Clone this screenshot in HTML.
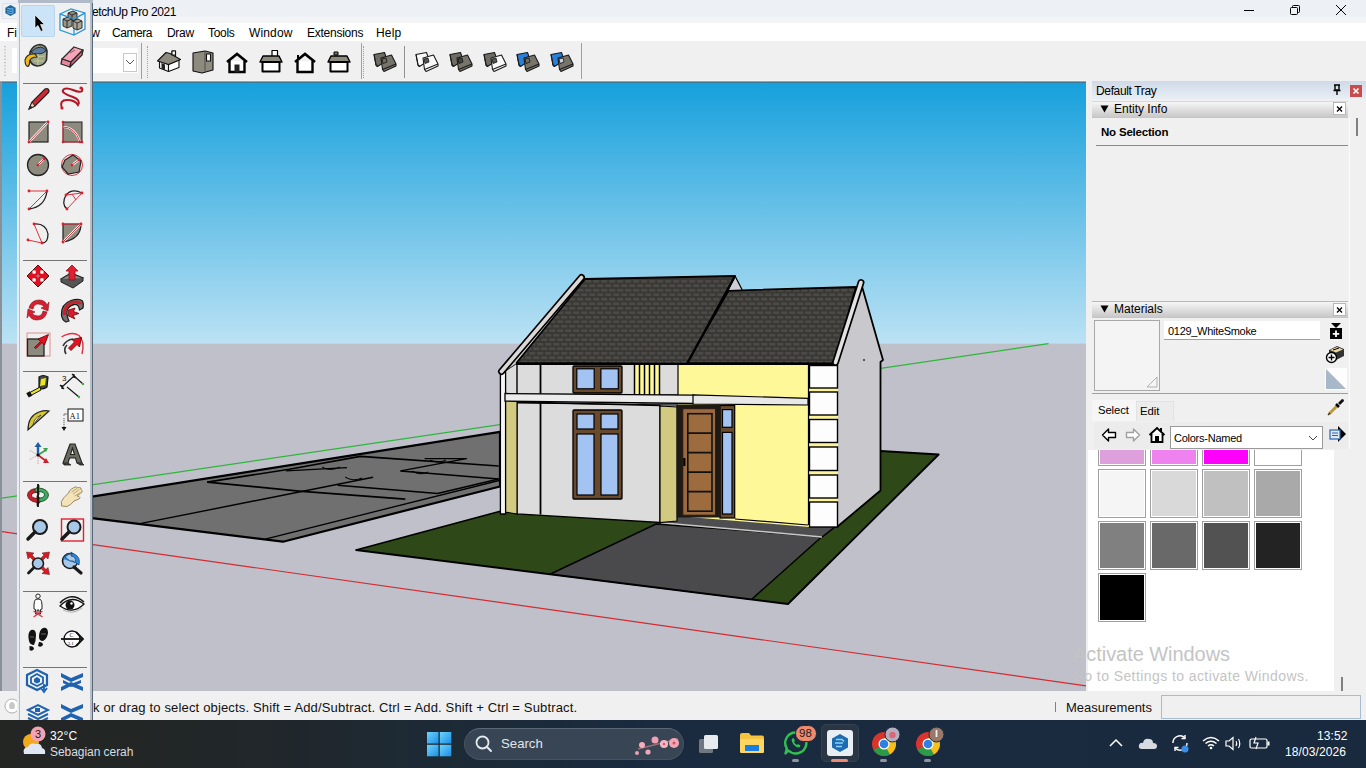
<!DOCTYPE html>
<html><head><meta charset="utf-8">
<style>
*{margin:0;padding:0;box-sizing:border-box}
html,body{width:1366px;height:768px;overflow:hidden;background:#f0f0f0;font-family:"Liberation Sans",sans-serif;color:#000}
.a{position:absolute}
svg{position:absolute;overflow:visible}
.t{position:absolute;white-space:nowrap;font-size:12px;line-height:14px}
</style></head><body>

<!-- viewport -->
<svg class="a" style="left:0;top:0" width="1366" height="768" viewBox="0 0 1366 768">
<defs>
<linearGradient id="sky" x1="0" y1="0" x2="0" y2="1">
<stop offset="0" stop-color="#16a0dc"/>
<stop offset="1" stop-color="#bce2f4"/>
</linearGradient>
<pattern id="sh" patternUnits="userSpaceOnUse" width="8" height="9">
<rect width="8" height="9" fill="#393835"/>
<path d="M1 1 H7 L7.5 3.6 H1.5Z" fill="#4d4b47"/>
<path d="M5 5.5 H11 L11.5 8.1 H5.5Z" fill="#4d4b47"/>
<path d="M-3 5.5 H3 L3.5 8.1 H-2.5Z" fill="#4d4b47"/>
</pattern>
<clipPath id="vp"><rect x="2" y="82" width="1084" height="609"/></clipPath>
</defs>
<rect x="0" y="80" width="1086" height="612" fill="#8a9098"/>
<g clip-path="url(#vp)">
<rect x="0" y="82" width="1086" height="262" fill="url(#sky)"/>
<rect x="0" y="343.6" width="1086" height="348" fill="#bfc0ca"/>
<!-- green axis -->
<path d="M0 498.4 L1048.6 343.6" stroke="#2fb53c" stroke-width="1.3"/>
<!-- red axis -->
<path d="M0 531.4 L1086 685.8" stroke="#d42a30" stroke-width="1.2"/>
<!-- neighbour pad -->
<g stroke="#000" fill="none" stroke-linejoin="round">
<path d="M92 496.6 L500 431.8 L500 486.5 L282.9 541.7 L92 518.1Z" fill="#707071" stroke-width="2.2"/>
<path d="M265.2 539.1 L499 480.5" stroke-width="1.3"/>
<path d="M141.2 523.4 L373.1 477.3" stroke-width="1.4"/>
<path d="M207.2 482.1 L299 491.1 L405.3 499.2" stroke-width="1.8"/>
<path d="M207.2 482.1 L289.3 469.2 L360.2 456.4 L498.7 466" stroke-width="1.6"/>
<path d="M286.1 470.9 L347 467.6" stroke-width="1.3"/>
<path d="M337.6 485.3 L437.5 493.4 L498.7 478.9" stroke-width="1.5"/>
<path d="M400.5 470.9 L498.7 478.9" stroke-width="1.5"/>
<path d="M400.5 470.9 L466.5 458.6 L424.6 458.6" stroke-width="1.3"/>
<path d="M322 467 Q330 472 340 467 M345 477 Q353 482 362 478 M412 471 Q420 476 428 472 M430 460 Q438 464 446 460" stroke-width="1"/>
</g>
<!-- lawn -->
<path d="M356 550 L503 510.5 L880.6 451 L938.7 454.5 L788 604Z" fill="#2e4818" stroke="#000" stroke-width="1.8" stroke-linejoin="round"/>
<!-- driveway -->
<path d="M550.5 574 L656 524 L822 536.5 L751.7 599.3Z" fill="#4a4a4c" stroke="#000" stroke-width="1.4"/>
<!-- porch step -->
<path d="M659 522.5 L676 514 L808 525 L836 527 L822 537.5Z" fill="#4e4e50" stroke="#111" stroke-width="0.8"/>
<path d="M661 522.7 L822 536.9" stroke="#c8c8c8" stroke-width="1.5"/>
<!-- side wall plinth -->
<path d="M822 537 L880 491" stroke="#000" stroke-width="1.2"/>

<!-- right gable side wall -->
<path d="M861 283 L883 360 L880.5 362 L880.5 490.5 L837 527 L837 364Z" fill="#c9c9cd" stroke="#000" stroke-width="1.8" stroke-linejoin="round"/>
<circle cx="864" cy="360" r="0.9" fill="#222"/>
<!-- yellow wall -->
<path d="M677 364 L809 365 L809 527 L677 516Z" fill="#fff898"/>
<!-- quoins -->
<rect x="809" y="365" width="29" height="162" fill="#fbf49a"/>
<g fill="#fdfdfd" stroke="#000" stroke-width="1.4">
<rect x="809.5" y="365.5" width="28" height="22.5"/>
<rect x="809.5" y="392" width="28" height="23"/>
<rect x="809.5" y="419.5" width="28" height="23"/>
<rect x="809.5" y="447" width="28" height="23.5"/>
<rect x="809.5" y="475" width="28" height="23"/>
<rect x="809.5" y="502" width="28" height="25"/>
</g>
<path d="M677 364 V516 M808.5 364 V525 M735 519 L808 525" stroke="#000" stroke-width="1.2"/>

<!-- upper front wall -->
<path d="M505 371 L517 363 L678 364.5 L678 395 L505 394Z" fill="#dcdcdc" stroke="#000" stroke-width="1.2"/>
<path d="M517 363 V394" stroke="#000" stroke-width="1.4"/>
<path d="M540.5 363 V394" stroke="#000" stroke-width="1.8"/>
<!-- vent -->
<rect x="634.3" y="364" width="25.7" height="32" fill="#fff898"/>
<path d="M634.5 364 V396 M639.5 364 V396 M644.5 364 V396 M649.5 364 V396 M654.5 364 V396 M659.5 364 V396" stroke="#000" stroke-width="1.5"/>
<!-- upper window -->
<rect x="573" y="366" width="49" height="27" fill="#6a4a2c" stroke="#000" stroke-width="1.3" rx="1"/>
<rect x="576.8" y="368.8" width="17.4" height="20" fill="#a3c4f2" stroke="#000" stroke-width="1.2"/>
<rect x="600.9" y="368.8" width="17.4" height="20" fill="#a3c4f2" stroke="#000" stroke-width="1.2"/>

<!-- lower front wall -->
<path d="M517 402 L660 405.5 L660 522.5 L517 514Z" fill="#dcdcdc" stroke="#000" stroke-width="1.3"/>
<path d="M540.5 403 V514.5" stroke="#000" stroke-width="1.8"/>
<!-- left olive side -->
<path d="M505 400 L517 401.5 L517 514 L505 512Z" fill="#d2ca80" stroke="#000" stroke-width="1.1"/>
<!-- corner post -->
<path d="M500.4 372 H505.6 V514 H500.4Z" fill="#f4f4f4" stroke="#000" stroke-width="1.3"/>
<!-- lower window -->
<rect x="573" y="410" width="49" height="89" fill="#6a4a2c" stroke="#000" stroke-width="1.3" rx="1"/>
<rect x="577" y="414" width="17" height="15" fill="#a3c4f2" stroke="#000" stroke-width="1.2"/>
<rect x="601" y="414" width="17" height="15" fill="#a3c4f2" stroke="#000" stroke-width="1.2"/>
<rect x="577" y="434" width="17" height="61" fill="#a3c4f2" stroke="#000" stroke-width="1.2"/>
<rect x="601" y="434" width="17" height="61" fill="#a3c4f2" stroke="#000" stroke-width="1.2"/>
<!-- right olive pillar -->
<path d="M660 406 L677 407 L677 521 L660 522.5Z" fill="#d2ca80" stroke="#000" stroke-width="1.2"/>
<!-- door recess -->
<rect x="676.8" y="404.5" width="43" height="113" fill="#1e1a16"/>
<rect x="682.8" y="408.7" width="32.8" height="106.5" fill="#9a6a40" stroke="#2a1a10" stroke-width="1"/>
<rect x="687.8" y="413.7" width="24.2" height="97.5" fill="#9c6b3e" stroke="#111" stroke-width="1.6"/>
<path d="M687.8 433.2 H712 M687.8 452.7 H712 M687.8 472.2 H712 M687.8 491.7 H712" stroke="#111" stroke-width="1.8"/>
<path d="M684.3 458 V466" stroke="#000" stroke-width="2.2"/>
<rect x="720" y="405.5" width="14.7" height="112.5" fill="#6a4a2c" stroke="#000" stroke-width="1.2"/>
<rect x="722.5" y="409.6" width="9.5" height="17.7" fill="#a3c4f2" stroke="#000" stroke-width="1.2"/>
<rect x="722.5" y="432.4" width="9.5" height="81.6" fill="#a3c4f2" stroke="#000" stroke-width="1.2"/>

<!-- slab -->
<path d="M505 393.5 L694 395.2 L694 403.5 L505 401Z" fill="#ececec" stroke="#000" stroke-width="1.3"/>
<path d="M517 403 L676 405" stroke="#000" stroke-width="1.2"/>
<path d="M693 394.8 L808 398.4 L808 405 L693 404Z" fill="#e8e8e8" stroke="#000" stroke-width="1.2"/>

<!-- gable fill -->
<path d="M580 277 L586 279 L516.6 363 L505 371 L500 372Z" fill="#d2d2d4"/>
<path d="M857 285 L862 283 L836 363 L833 364Z" fill="#d2d2d4"/>
<!-- small gable behind -->
<path d="M735 276 L742.5 290.5 L728 290.8Z" fill="#cfcfd3" stroke="#000" stroke-width="1.2"/>
<!-- right roof -->
<path d="M728.5 290.8 L742 290.3 L856 287 L834 363.5 L686.8 363Z" fill="url(#sh)" stroke="#000" stroke-width="1.8" stroke-linejoin="round"/>
<!-- left roof -->
<path d="M585 279 L735 276 L687 363.7 L516.6 362.8Z" fill="url(#sh)" stroke="#000" stroke-width="1.8" stroke-linejoin="round"/>
<path d="M735 276 L687 363.7" stroke="#000" stroke-width="2.2"/>
<path d="M516 364 H687" stroke="#000" stroke-width="2"/>
<path d="M687 364 L835 364" stroke="#000" stroke-width="2"/>
<!-- barge boards -->
<path d="M581.5 277.5 L501.5 371.5" stroke="#000" stroke-width="7" stroke-linecap="round"/>
<path d="M581.5 277.5 L501.5 371.5" stroke="#dcd8d5" stroke-width="3.6" stroke-linecap="round"/>
<path d="M861 282.5 L835.5 362.5" stroke="#000" stroke-width="7" stroke-linecap="round"/>
<path d="M861 282.5 L835.5 362.5" stroke="#e4e2e0" stroke-width="3.6" stroke-linecap="round"/>
</g>
</svg>


<!-- title bar -->
<div class="a" style="left:0;top:0;width:1366px;height:23px;background:linear-gradient(#edf1f6 0,#edf1f6 73%,#f2f4f6 74%,#f3f4f5 100%)"></div>
<div class="a" style="left:2px;top:3px;width:16px;height:16px;border:1px solid #e0e4e8"></div>
<svg style="left:4px;top:4px" width="13" height="13" viewBox="0 0 14 14"><path d="M7 1 L12.5 4 L12.5 10 L7 13 L1.5 10 L1.5 4Z" fill="#22649a"/><path d="M3.5 4.5 L8.5 5.5 M3 7 L8.5 8 M3.5 9.5 L8.5 10.5 M9.5 4 V11" stroke="#6ab8e6" stroke-width="1.2"/></svg>
<div class="t" style="left:92px;top:5px;font-size:12px;letter-spacing:-0.4px;color:#000">etchUp Pro 2021</div>
<svg style="left:1243px;top:5px" width="12" height="12"><path d="M1 5.5 H11" stroke="#000" stroke-width="1"/></svg>
<svg style="left:1289px;top:4px" width="12" height="12"><rect x="1.5" y="3.5" width="7" height="7" rx="1" fill="none" stroke="#000"/><path d="M3.5 3.5 V2.5 Q3.5 1.5 4.5 1.5 H9.5 Q10.5 1.5 10.5 2.5 V7.5 Q10.5 8.5 9.5 8.5 H8.5" fill="none" stroke="#000"/></svg>
<svg style="left:1335px;top:4px" width="12" height="12"><path d="M1 1 L11 11 M11 1 L1 11" stroke="#000" stroke-width="1"/></svg>

<!-- menu bar -->
<div class="a" style="left:0;top:23px;width:1366px;height:18px;background:#fff"></div>
<div class="t" style="left:7px;top:26px">File</div>
<div class="t" style="left:74px;top:26px">View</div>
<div class="t" style="left:112px;top:26px;letter-spacing:-0.45px">Camera</div>
<div class="t" style="left:167px;top:26px;letter-spacing:-0.3px">Draw</div>
<div class="t" style="left:208px;top:26px;letter-spacing:-0.3px">Tools</div>
<div class="t" style="left:249px;top:26px;letter-spacing:0.15px">Window</div>
<div class="t" style="left:307px;top:26px;letter-spacing:-0.25px">Extensions</div>
<div class="t" style="left:376px;top:26px;letter-spacing:0.2px">Help</div>

<!-- toolbar -->
<div class="a" style="left:0;top:41px;width:1366px;height:39px;background:#f0f0f0"></div>
<div class="a" style="left:0;top:80px;width:1086px;height:1px;background:#f5f4f2"></div>
<div class="a" style="left:0;top:81px;width:1086px;height:1px;background:#98a4aa"></div>
<div class="a" style="left:12px;top:48px;width:126px;height:25px;background:#fff"></div>
<div class="a" style="left:123px;top:53px;width:14px;height:19px;background:#fff;border:1px solid #c9c9c9"></div>
<svg style="left:125px;top:58px" width="10" height="8"><path d="M1 2 L5 6 L9 2" fill="none" stroke="#555" stroke-width="1"/></svg>
<div class="a" style="left:141px;top:43px;width:1px;height:36px;background:#a0a0a0"></div>
<div class="a" style="left:147px;top:46px;width:1px;height:32px;border-left:1px dotted #a0a0a0"></div>
<div class="a" style="left:361px;top:43px;width:1px;height:36px;background:#a0a0a0"></div>
<div class="a" style="left:363px;top:46px;width:1px;height:32px;border-left:1px dotted #a0a0a0"></div>
<div class="a" style="left:404px;top:46px;width:1px;height:32px;background:#909090"></div>
<div class="a" style="left:581px;top:43px;width:1px;height:36px;background:#a0a0a0"></div>
<svg style="left:0;top:41px" width="600" height="39" viewBox="0 41 600 39">
<!-- left grip near logo -->
<path d="M5 46 V78" stroke="#a8a8a8" stroke-width="1.2" stroke-dasharray="1.2 2"/>
<!-- iso house -->
<g transform="translate(157,50)" stroke="#111" stroke-width="1.1" stroke-linejoin="round">
<path d="M2.5 11 L11.5 14.5 V21.5 L2.5 18Z" fill="#f4f4f4"/>
<path d="M11.5 14.5 L22 10 V17.5 L11.5 21.5Z" fill="#fff"/>
<path d="M4.5 13 L8 14.5 V20 L4.5 18.5Z" fill="#222" stroke="none"/>
<rect x="15" y="1" width="3.5" height="5.5" fill="#fff"/>
<path d="M0.5 11 L9 2.5 L13 3.5 L23.5 9.5 L11.5 14.5Z" fill="#8d8a7e"/>
<rect x="15" y="1" width="3.5" height="4" fill="#fff"/>
</g>
<!-- top box -->
<g transform="translate(192,50)" stroke="#111" stroke-width="1.1" stroke-linejoin="round">
<path d="M1 3 L13 1 L21 3 V20 L10 23 L1 21Z" fill="#8d8a7e"/>
<path d="M13 1 V21" fill="none" stroke="#555"/>
<rect x="14.5" y="4" width="4" height="7" fill="#fff"/>
</g>
<!-- front house -->
<g transform="translate(225,52)">
<path d="M2 10 L12 2 L22 10" fill="none" stroke="#000" stroke-width="2.6"/>
<path d="M4.5 9 V20 H19.5 V9" fill="#fff" stroke="#000" stroke-width="2.4"/>
<rect x="9.5" y="12.5" width="5" height="8" fill="#222"/>
</g>
<!-- right house -->
<g transform="translate(259,50)" stroke="#000" stroke-linejoin="round">
<rect x="13" y="0.5" width="5.5" height="6.5" fill="#fff" stroke-width="1.2"/>
<path d="M1 12 L4 6 H20 L23 12Z" fill="#8d8a7e" stroke-width="1.4"/>
<rect x="3.5" y="12" width="17" height="9.5" fill="#fff" stroke-width="2"/>
</g>
<!-- back house -->
<g transform="translate(293,52)">
<path d="M5 3 V7" stroke="#000" stroke-width="2"/>
<path d="M2 10 L12 2 L22 10" fill="none" stroke="#000" stroke-width="2.6"/>
<path d="M4.5 9 V20 H19.5 V9" fill="#fff" stroke="#000" stroke-width="2.4"/>
</g>
<!-- left house -->
<g transform="translate(327,51)" stroke="#000" stroke-linejoin="round">
<rect x="7" y="1" width="4" height="3" fill="#777" stroke-width="1"/>
<path d="M1 11 L4 5 H20 L23 11Z" fill="#8d8a7e" stroke-width="1.4"/>
<rect x="3.5" y="11" width="17" height="9.5" fill="#fff" stroke-width="2"/>
</g>
<!-- style icons -->
<g transform="translate(373,51)" stroke="#1a1a1a" stroke-width="1.1" stroke-linejoin="round"><path d="M1 3.5 L11.5 1.5 L13 6 V10 L4.5 15.5 L3 14 Z" fill="#6f6d63"/><path d="M1 3.5 L3 14 L4.5 15.5" fill="none"/><path d="M8 7 L18.5 4 L23 13 V15 L11 20.5 L9.5 18.5Z" fill="#77756b"/><path d="M9.5 18.5 L23 13" fill="none"/><path d="M9 8 L13 7 L14 11 L10 12.5Z" fill="#6f6d63" stroke="#111" stroke-width="0.8"/></g>
<g transform="translate(415,51)" stroke="#1a1a1a" stroke-width="1.1" stroke-linejoin="round"><path d="M1 3.5 L11.5 1.5 L13 6 V10 L4.5 15.5 L3 14 Z" fill="#fafafa"/><path d="M1 3.5 L3 14 L4.5 15.5" fill="none"/><path d="M8 7 L18.5 4 L23 13 V15 L11 20.5 L9.5 18.5Z" fill="#fafafa"/><path d="M9.5 18.5 L23 13" fill="none"/><path d="M9 8 L13 7 L14 11 L10 12.5Z" fill="#555" stroke="#111" stroke-width="0.8"/></g>
<g transform="translate(449,51)" stroke="#1a1a1a" stroke-width="1.1" stroke-linejoin="round"><path d="M1 3.5 L11.5 1.5 L13 6 V10 L4.5 15.5 L3 14 Z" fill="#6f6d63"/><path d="M1 3.5 L3 14 L4.5 15.5" fill="none"/><path d="M8 7 L18.5 4 L23 13 V15 L11 20.5 L9.5 18.5Z" fill="#77756b"/><path d="M9.5 18.5 L23 13" fill="none"/><path d="M9 8 L13 7 L14 11 L10 12.5Z" fill="#444" stroke="#111" stroke-width="0.8"/></g>
<g transform="translate(483,51)" stroke="#1a1a1a" stroke-width="1.1" stroke-linejoin="round"><path d="M1 3.5 L11.5 1.5 L13 6 V10 L4.5 15.5 L3 14 Z" fill="#6f6d63"/><path d="M1 3.5 L3 14 L4.5 15.5" fill="none"/><path d="M8 7 L18.5 4 L23 13 V15 L11 20.5 L9.5 18.5Z" fill="#fafafa"/><path d="M9.5 18.5 L23 13" fill="none"/><path d="M9 8 L13 7 L14 11 L10 12.5Z" fill="#555" stroke="#111" stroke-width="0.8"/></g>
<g transform="translate(516,51)" stroke="#1a1a1a" stroke-width="1.1" stroke-linejoin="round"><path d="M1 3.5 L11.5 1.5 L13 6 V10 L4.5 15.5 L3 14 Z" fill="#2a7fd8"/><path d="M1 3.5 L3 14 L4.5 15.5" fill="none"/><path d="M8 7 L18.5 4 L23 13 V15 L11 20.5 L9.5 18.5Z" fill="#77756b"/><path d="M9.5 18.5 L23 13" fill="none"/><path d="M9 8 L13 7 L14 11 L10 12.5Z" fill="#6f6d63" stroke="#111" stroke-width="0.8"/></g>
<g transform="translate(550,51)" stroke="#1a1a1a" stroke-width="1.1" stroke-linejoin="round"><path d="M1 3.5 L11.5 1.5 L13 6 V10 L4.5 15.5 L3 14 Z" fill="#2a7fd8"/><path d="M1 3.5 L3 14 L4.5 15.5" fill="none"/><path d="M8 7 L18.5 4 L23 13 V15 L11 20.5 L9.5 18.5Z" fill="#77756b"/><path d="M9.5 18.5 L23 13" fill="none"/><path d="M9 8 L13 7 L14 11 L10 12.5Z" fill="#c8d4e0" stroke="#111" stroke-width="0.8"/></g>
</svg>
<div class="a" style="left:2px;top:82px;width:1084px;height:1px;background:#3a7896"></div>
<div class="a" style="left:2px;top:83px;width:1084px;height:1px;background:#3b96c6"></div>

<!-- tray -->
<div class="a" style="left:1086px;top:82px;width:280px;height:609px;background:#f0f0f0"></div>
<div class="a" style="left:1092px;top:81px;width:274px;height:18px;background:linear-gradient(#cfdae8,#e9eef4)"></div>
<div class="t" style="left:1096px;top:84px;letter-spacing:-0.35px">Default Tray</div>
<svg style="left:1331px;top:84px" width="12" height="12"><path d="M3 1 H9 M4 1 V6 H8 V1 M2.5 6.5 H9.5 M6 6.5 V11" stroke="#000" stroke-width="1.4" fill="none"/></svg>
<div class="a" style="left:1350px;top:85px;width:12px;height:12px;background:#c94b4b"></div>
<svg style="left:1350px;top:85px" width="12" height="12"><path d="M3.5 3.5 L8.5 8.5 M8.5 3.5 L3.5 8.5" stroke="#fff" stroke-width="1.6"/></svg>

<div class="a" style="left:1092px;top:101px;width:256px;height:17px;background:linear-gradient(#f6f6f6,#c5c5c5);border-top:1px solid #d8d8d8"></div>
<svg style="left:1100px;top:105px" width="9" height="9"><path d="M0.5 0.5 H8.5 L4.5 7.5Z" fill="#000"/></svg>
<div class="t" style="left:1114px;top:102px">Entity Info</div>
<div class="a" style="left:1333px;top:102px;width:13px;height:13px;background:#fff;border:1px solid #b8b8b8"></div>
<svg style="left:1333px;top:102px" width="13" height="13"><path d="M4 4.5 L9 9.5 M9 4.5 L4 9.5" stroke="#000" stroke-width="1.3"/></svg>
<div class="t" style="left:1101px;top:125px;font-weight:bold;font-size:11.5px;letter-spacing:-0.2px">No Selection</div>
<div class="a" style="left:1096px;top:145px;width:252px;height:1px;background:#8a8a8a"></div>
<div class="a" style="left:1349px;top:118px;width:1px;height:573px;background:#fbfbfb"></div>
<div class="a" style="left:1356px;top:118px;width:2px;height:18px;background:#808080"></div>

<div class="a" style="left:1092px;top:301px;width:256px;height:17px;background:linear-gradient(#f6f6f6,#c5c5c5);border-top:1px solid #b8b8b8"></div>
<svg style="left:1100px;top:305px" width="9" height="9"><path d="M0.5 0.5 H8.5 L4.5 7.5Z" fill="#000"/></svg>
<div class="t" style="left:1114px;top:302px">Materials</div>
<div class="a" style="left:1333px;top:303px;width:13px;height:13px;background:#fff;border:1px solid #b8b8b8"></div>
<svg style="left:1333px;top:303px" width="13" height="13"><path d="M4 4.5 L9 9.5 M9 4.5 L4 9.5" stroke="#000" stroke-width="1.3"/></svg>
<div class="a" style="left:1094px;top:320px;width:66px;height:71px;background:#f4f4f4;border:1px solid #a8a8a8"></div>
<svg style="left:1146px;top:376px" width="12" height="12"><path d="M1 11 L11 1 V11Z" fill="none" stroke="#b0b0b0"/></svg>
<div class="a" style="left:1164px;top:321px;width:156px;height:19px;background:#fff;border-bottom:1px solid #a0a0a0"></div>
<div class="t" style="left:1168px;top:324px;font-size:11px;letter-spacing:-0.3px">0129_WhiteSmoke</div>
<div class="a" style="left:1092px;top:393px;width:256px;height:1px;background:#a0a0a0"></div>
<div class="a" style="left:1092px;top:400px;width:44px;height:21px;background:#f6f6f6"></div>
<div class="a" style="left:1136px;top:401px;width:38px;height:20px;background:#ececec;border:1px solid #e2e2e2;border-bottom:none"></div>
<div class="t" style="left:1098px;top:403px;font-size:11.3px;letter-spacing:-0.1px">Select</div>
<div class="t" style="left:1140px;top:404px;font-size:11.3px">Edit</div>
<div class="a" style="left:1094px;top:422px;width:254px;height:27px;background:#ececec"></div>
<div class="a" style="left:1170px;top:426px;width:153px;height:23px;background:#fff;border:1px solid #9a9a9a"></div>
<div class="t" style="left:1174px;top:431px;font-size:11px;letter-spacing:-0.25px">Colors-Named</div>
<svg style="left:1308px;top:434px" width="10" height="8"><path d="M1 2 L5 6 L9 2" fill="none" stroke="#444" stroke-width="1"/></svg>

<div class="a" style="left:1088px;top:450px;width:246px;height:241px;background:#fff"></div>
<div class="a" style="left:1334px;top:449px;width:16px;height:242px;background:#f0f0f0"></div>
<div class="a" style="left:1341px;top:677px;width:2px;height:15px;background:#808080"></div>

<!-- material icons -->
<svg style="left:1328px;top:322px" width="16" height="18" viewBox="0 0 16 18"><path d="M3 1 H13 L8 6Z" fill="#000"/><rect x="2" y="6" width="12" height="11" fill="#000"/><path d="M8 8.5 V15 M4.8 11.8 H11.2" stroke="#fff" stroke-width="1.8"/></svg>
<svg style="left:1325px;top:344px" width="20" height="20" viewBox="0 0 20 20"><path d="M4 6 L12 2 L19 5 L19 12 L11 16 L4 13Z" fill="#333"/><path d="M5 6 L12 3 L18 5.5 L11 8.5Z" fill="#e8d7a0"/><path d="M8 6 L14 4" stroke="#000" stroke-width="1"/><circle cx="6.5" cy="13.5" r="5" fill="#fff" stroke="#000" stroke-width="1.4"/><path d="M6.5 10.5 V16.5 M3.5 13.5 H9.5" stroke="#000" stroke-width="1.4"/></svg>
<svg style="left:1325px;top:368px" width="22" height="22"><rect x="0" y="0" width="22" height="22" fill="#fdfdfd"/><path d="M1 1 L21 21 H1Z" fill="#a8b8c8"/></svg>
<svg style="left:1326px;top:397px" width="20" height="20" viewBox="0 0 20 20"><path d="M3 17 L11 9" stroke="#b89a40" stroke-width="3"/><path d="M2 18 L4 16" stroke="#333" stroke-width="1.5"/><path d="M10 7 L13 10" stroke="#000" stroke-width="2.5"/><path d="M12 6 L16 2 Q18 2 18 4 L14 8Z" fill="#111"/></svg>
<svg style="left:1101px;top:427px" width="16" height="16" viewBox="0 0 16 16"><path d="M1.5 8 L7.5 2 V5.5 H14.5 V10.5 H7.5 V14Z" fill="#fff" stroke="#000" stroke-width="1.4" stroke-linejoin="round"/></svg>
<svg style="left:1125px;top:427px" width="16" height="16" viewBox="0 0 16 16"><path d="M14.5 8 L8.5 2 V5.5 H1.5 V10.5 H8.5 V14Z" fill="#fff" stroke="#a0a0a0" stroke-width="1.4" stroke-linejoin="round"/></svg>
<svg style="left:1148px;top:426px" width="18" height="18" viewBox="0 0 18 18"><path d="M1.5 9 L9 2 L16.5 9 M3.5 8 V16 H14.5 V8" fill="#fff" stroke="#000" stroke-width="1.8"/><rect x="7" y="10" width="4" height="6" fill="#000"/><rect x="12" y="2" width="2" height="4" fill="#000"/></svg>
<svg style="left:1329px;top:425px" width="18" height="18" viewBox="0 0 18 18"><path d="M9 1 L17 9 L9 17Z" fill="#000"/><rect x="1" y="5" width="10" height="9" fill="#dfe8f3" stroke="#2a62b0" stroke-width="1.2"/><path d="M3 8 H9 M3 10.5 H9" stroke="#2a62b0"/></svg>

<!-- swatches -->
<div class="a" style="left:1088px;top:450px;width:246px;height:241px;overflow:hidden">
<div class="a" style="left:10px;top:-33px;width:48px;height:49px;background:#dda0dd;border:1px solid #a0a0a0;box-shadow:inset 0 0 0 1px #fff"></div>
<div class="a" style="left:62px;top:-33px;width:48px;height:49px;background:#ee82ee;border:1px solid #a0a0a0;box-shadow:inset 0 0 0 1px #fff"></div>
<div class="a" style="left:114px;top:-33px;width:48px;height:49px;background:#ff00ff;border:1px solid #a0a0a0;box-shadow:inset 0 0 0 1px #fff"></div>
<div class="a" style="left:166px;top:-33px;width:48px;height:49px;background:#ffffff;border:1px solid #a0a0a0;box-shadow:inset 0 0 0 1px #fff"></div>
<div class="a" style="left:10px;top:19px;width:48px;height:49px;background:#f5f5f5;border:1px solid #a0a0a0;box-shadow:inset 0 0 0 1px #fff"></div>
<div class="a" style="left:62px;top:19px;width:48px;height:49px;background:#d9d9d9;border:1px solid #a0a0a0;box-shadow:inset 0 0 0 1px #fff"></div>
<div class="a" style="left:114px;top:19px;width:48px;height:49px;background:#c0c0c0;border:1px solid #a0a0a0;box-shadow:inset 0 0 0 1px #fff"></div>
<div class="a" style="left:166px;top:19px;width:48px;height:49px;background:#a9a9a9;border:1px solid #a0a0a0;box-shadow:inset 0 0 0 1px #fff"></div>
<div class="a" style="left:10px;top:71px;width:48px;height:49px;background:#808080;border:1px solid #a0a0a0;box-shadow:inset 0 0 0 1px #fff"></div>
<div class="a" style="left:62px;top:71px;width:48px;height:49px;background:#696969;border:1px solid #a0a0a0;box-shadow:inset 0 0 0 1px #fff"></div>
<div class="a" style="left:114px;top:71px;width:48px;height:49px;background:#525252;border:1px solid #a0a0a0;box-shadow:inset 0 0 0 1px #fff"></div>
<div class="a" style="left:166px;top:71px;width:48px;height:49px;background:#232323;border:1px solid #a0a0a0;box-shadow:inset 0 0 0 1px #fff"></div>
<div class="a" style="left:10px;top:123px;width:48px;height:49px;background:#000000;border:1px solid #a0a0a0;box-shadow:inset 0 0 0 1px #fff"></div>
</div>
<div class="t" style="left:1073px;top:642px;font-size:20px;line-height:24px;color:#c4c4c4;letter-spacing:-0.05px">Activate Windows</div>
<div class="t" style="left:1073px;top:668px;font-size:14px;line-height:17px;color:#c4c4c4;letter-spacing:0.42px">Go to Settings to activate Windows.</div>

<!-- status bar -->
<div class="a" style="left:0;top:691px;width:1366px;height:29px;background:#f0f0f0"></div>
<svg style="left:4px;top:698px" width="16" height="16" viewBox="0 0 16 16"><circle cx="8" cy="8" r="7" fill="#fff" stroke="#b0b0b0"/><path d="M6 11 Q4 8 6 5 Q8 3 10 5 Q12 8 10 11Z" fill="#c8c8c8"/></svg>
<div class="t" style="left:93px;top:700px;font-size:13px;line-height:15px;letter-spacing:0.16px;color:#111">k or drag to select objects. Shift = Add/Subtract. Ctrl = Add. Shift + Ctrl = Subtract.</div>
<div class="a" style="left:1055px;top:702px;width:1px;height:10px;background:#808080"></div>
<div class="t" style="left:1066px;top:700px;font-size:13px;line-height:15px;color:#111">Measurements</div>
<div class="a" style="left:1161px;top:695px;width:200px;height:24px;background:#f0f0f0;border:1px solid #a9bccf"></div>

<!-- taskbar -->
<div class="a" style="left:0;top:720px;width:1366px;height:48px;background:linear-gradient(90deg,#242624 0px,#222626 160px,#20272c 300px,#1d2a35 420px,#1a2a3f 650px,#1a2a3e 1366px)"></div>
<svg style="left:18px;top:726px" width="40" height="36" viewBox="0 0 40 36">
<circle cx="13" cy="16" r="8" fill="#f2a91c"/>
<path d="M6 28 Q4 22 10 21 Q12 16 18 18 Q23 17 24 22 Q28 23 27 28Z" fill="#dfe8f2"/>
<circle cx="20" cy="8" r="7.5" fill="#f4a2b4"/>
<text x="20" y="12" font-family="Liberation Sans" font-size="11" fill="#1a1a1a" text-anchor="middle">3</text>
</svg>
<div class="t" style="left:50px;top:729px;font-size:12px;color:#fff;letter-spacing:0.1px">32°C</div>
<div class="t" style="left:50px;top:745px;font-size:12px;color:#d8dde4;letter-spacing:-0.05px">Sebagian cerah</div>
<svg style="left:427px;top:732px" width="25" height="25" viewBox="0 0 25 25">
<defs><linearGradient id="wl" x1="0" y1="0" x2="1" y2="1"><stop offset="0" stop-color="#6fd3fb"/><stop offset="1" stop-color="#1a8fe6"/></linearGradient></defs>
<rect x="0" y="0" width="11.5" height="11.5" fill="url(#wl)"/><rect x="12.8" y="0" width="11.5" height="11.5" fill="url(#wl)"/>
<rect x="0" y="12.8" width="11.5" height="11.5" fill="url(#wl)"/><rect x="12.8" y="12.8" width="11.5" height="11.5" fill="url(#wl)"/>
</svg>
<div class="a" style="left:464px;top:728px;width:220px;height:32px;border-radius:16px;background:#374555;border:1px solid #46535f;border-top-color:#5a6876"></div>
<svg style="left:474px;top:734px" width="20" height="20" viewBox="0 0 20 20"><circle cx="8.5" cy="8.5" r="6" fill="none" stroke="#e6e9ee" stroke-width="1.8"/><path d="M12.8 12.8 L17 17" stroke="#e6e9ee" stroke-width="2" stroke-linecap="round"/></svg>
<div class="t" style="left:501px;top:736px;font-size:13.2px;line-height:16px;color:#e3e6ea">Search</div>
<svg style="left:630px;top:731px" width="54" height="26" viewBox="0 0 54 26">
<path d="M8 18 L48 8" stroke="#9a6f6f" stroke-width="1.5"/>
<circle cx="44" cy="12" r="5" fill="#f0a6b4"/><circle cx="34" cy="13" r="4" fill="#f4b8c4"/><circle cx="25" cy="9" r="3.5" fill="#f0a0b2"/><circle cx="12" cy="14" r="3" fill="#f3aec0"/><circle cx="18" cy="21" r="2.6" fill="#f0a8b8"/><circle cx="7" cy="22" r="2" fill="#eda0b0"/>
<circle cx="44" cy="12" r="1.5" fill="#d84c6c"/><circle cx="34" cy="13" r="1.2" fill="#d84c6c"/>
</svg>

<svg style="left:697px;top:732px" width="24" height="24" viewBox="0 0 24 24"><rect x="2" y="7" width="14" height="14" rx="1.5" fill="#6f7780"/><rect x="7" y="3" width="14" height="14" rx="1.5" fill="#e7eaee"/></svg>
<svg style="left:739px;top:731px" width="26" height="24" viewBox="0 0 26 24"><path d="M1 4 Q1 2 3 2 H10 L12 4.5 H23 Q25 4.5 25 6.5 V20 Q25 22 23 22 H3 Q1 22 1 20Z" fill="#f7c23e"/><rect x="1" y="8" width="24" height="14" rx="1.5" fill="#fcd661"/><rect x="6" y="14" width="14" height="6" fill="#1a7de0"/></svg>
<svg style="left:783px;top:730px" width="26" height="26" viewBox="0 0 26 26"><path d="M13 2.5 A10.5 10.5 0 1 1 5.5 20.5 L2.5 23.5 L3.8 18.5 A10.5 10.5 0 0 1 13 2.5Z" fill="none" stroke="#2fc24f" stroke-width="2.4" stroke-linejoin="round"/><path d="M9 8.5 Q8 11 10.5 14.5 Q13.5 18 16.5 17.5 L17.5 15.5 L15 14 L14 15 Q12 14 11 12 L12 11 L10.8 8.2Z" fill="#2fc24f"/></svg>
<div class="a" style="left:795px;top:725px;width:22px;height:17px;border-radius:9px;background:#ef8a6e;border:1px solid #1a2a3f"></div>
<div class="t" style="left:799px;top:727px;font-size:11.5px;line-height:13px;color:#1a1a1a">98</div>
<div class="a" style="left:821px;top:724px;width:38px;height:38px;border-radius:5px;background:#2b3644;border:1px solid #36414f"></div>
<svg style="left:827px;top:730px" width="26" height="26" viewBox="0 0 26 26"><rect x="0" y="0" width="26" height="26" rx="3" fill="#e9eef3"/><path d="M13 4 L21 8.5 V17.5 L13 22 L5 17.5 V8.5Z" fill="#1d6bb0"/><path d="M9 9.5 H15 L17 11.5 M8 13 H16 M9 16.5 H15" stroke="#8fd2f6" stroke-width="1.6" fill="none"/></svg>
<div class="a" style="left:831px;top:759px;width:17px;height:3px;border-radius:2px;background:#ef8a72"></div>
<div class="a" style="left:792px;top:759px;width:7px;height:3px;border-radius:2px;background:#8e959e"></div>
<div class="a" style="left:880px;top:759px;width:7px;height:3px;border-radius:2px;background:#8e959e"></div>
<div class="a" style="left:924px;top:759px;width:7px;height:3px;border-radius:2px;background:#8e959e"></div>
<svg style="left:871px;top:731px" width="26" height="26" viewBox="0 0 26 26"><circle cx="13" cy="13" r="12" fill="#d9352c"/><path d="M13 13 L2.6 19 A12 12 0 0 0 19 23.4Z" fill="#2c9b48"/><path d="M13 13 L19 23.4 A12 12 0 0 0 23.4 7 L13 7Z" fill="#f5c01a"/><circle cx="13" cy="13" r="5.5" fill="#fff"/><circle cx="13" cy="13" r="4.3" fill="#2e7fe6"/></svg>
<svg style="left:915px;top:731px" width="26" height="26" viewBox="0 0 26 26"><circle cx="13" cy="13" r="12" fill="#d9352c"/><path d="M13 13 L2.6 19 A12 12 0 0 0 19 23.4Z" fill="#2c9b48"/><path d="M13 13 L19 23.4 A12 12 0 0 0 23.4 7 L13 7Z" fill="#f5c01a"/><circle cx="13" cy="13" r="5.5" fill="#fff"/><circle cx="13" cy="13" r="4.3" fill="#2e7fe6"/></svg>
<svg style="left:884px;top:726px" width="17" height="17"><circle cx="8.5" cy="8.5" r="7.5" fill="#b4aec0" stroke="#1a2a3f"/><circle cx="8.5" cy="9" r="3.2" fill="#d86a78"/></svg>
<svg style="left:928px;top:726px" width="17" height="17"><circle cx="8.5" cy="8.5" r="7.5" fill="#9a7868" stroke="#1a2a3f"/><rect x="7.6" y="4" width="1.8" height="7" fill="#eee"/></svg>

<svg style="left:1108px;top:737px" width="16" height="12"><path d="M2 9 L8 3 L14 9" fill="none" stroke="#fff" stroke-width="1.5"/></svg>
<svg style="left:1138px;top:736px" width="20" height="14" viewBox="0 0 20 14"><path d="M4 13 Q0 13 1 9 Q2 6 5 7 Q6 2 11 3 Q15 3 15 7 Q19 7 19 10 Q19 13 16 13Z" fill="#d7dbe0"/></svg>
<svg style="left:1170px;top:733px" width="20" height="20" viewBox="0 0 20 20"><path d="M3 10 A7 7 0 0 1 15 5 M17 10 A7 7 0 0 1 5 15" fill="none" stroke="#fff" stroke-width="1.4"/><path d="M15 2 V5.5 H11.5 M5 18 V14.5 H8.5" fill="none" stroke="#fff" stroke-width="1.4"/><circle cx="15" cy="16" r="3.5" fill="#3a8ee8"/></svg>
<svg style="left:1202px;top:736px" width="18" height="14" viewBox="0 0 18 14"><path d="M1 5 Q9 -2 17 5 M3.5 7.5 Q9 3 14.5 7.5 M6 10 Q9 7.5 12 10" fill="none" stroke="#fff" stroke-width="1.5"/><circle cx="9" cy="12" r="1.3" fill="#fff"/></svg>
<svg style="left:1225px;top:736px" width="18" height="15" viewBox="0 0 18 15"><path d="M1 5 H4 L8 1.5 V13.5 L4 10 H1Z" fill="none" stroke="#fff" stroke-width="1.2"/><path d="M11 5 Q12.5 7.5 11 10 M13.5 3 Q16 7.5 13.5 12" fill="none" stroke="#fff" stroke-width="1.1"/></svg>
<svg style="left:1249px;top:735px" width="22" height="16" viewBox="0 0 22 16"><rect x="1" y="4" width="17" height="9" rx="1.5" fill="none" stroke="#fff" stroke-width="1.2"/><rect x="18.5" y="6.5" width="2" height="4" fill="#fff"/><path d="M7 2 L5 8 H9 L7 14" fill="none" stroke="#fff" stroke-width="1.2"/></svg>
<div class="t" style="left:1317px;top:729px;font-size:12px;color:#fff;letter-spacing:0.1px">13:52</div>
<div class="t" style="left:1285px;top:745px;font-size:12px;color:#fff;letter-spacing:0.1px">18/03/2026</div>

<!-- floating toolbar -->
<div class="a" style="left:17px;top:0;width:76px;height:720px;background:#f0f0f0;border-left:2px solid #e9eef3;border-right:3px solid #b8bec8"></div>
<div class="a" style="left:92px;top:0;width:1px;height:720px;background:#586874"></div>
<div class="a" style="left:19px;top:0;width:1px;height:720px;background:#b4bcc6"></div>
<div class="a" style="left:18px;top:0;width:75px;height:3px;background:#b0bac8"></div>
<div class="a" style="left:21px;top:5px;width:34px;height:32px;background:#cce4f7;border:1px solid #b8d6ee;border-radius:2px"></div>
<svg style="left:0;top:0;overflow:hidden" width="100" height="720" viewBox="0 0 100 720">
<g stroke="#747474" stroke-width="1"><path d="M23 83.5 H87"/><path d="M23 260.5 H87"/><path d="M23 371.5 H87"/><path d="M23 481.5 H87"/><path d="M23 591.5 H87"/><path d="M23 667.5 H87"/></g>
<!-- select -->
<path d="M35 15 L35 28 L38 25.5 L41 31.5 L43 30.5 L40.5 24.5 L44.5 24.5Z" fill="#000" stroke="#fff" stroke-width="0.6"/>
<!-- component -->
<g transform="translate(58,7)">
<path d="M2 7 L13 2 L27 6 V22 L16 28 L2 23Z M2 7 L16 12 L27 6 M16 12 V28" fill="none" stroke="#2a9ad8" stroke-width="1.3"/>
<g stroke="#222" stroke-width="0.9">
<path d="M10 6 L15 4 L19 6 V12 L14 14 L10 12Z" fill="#8e8c80"/><path d="M10 6 L14 8 L19 6 M14 8 V14" fill="none"/>
<path d="M5 12 L10 10 L14 12 V19 L9 21 L5 19Z" fill="#9a978a"/><path d="M5 12 L9 14 L14 12 M9 14 V21" fill="none"/>
<path d="M15 14 L20 12 L24 14 V21 L19 23 L15 21Z" fill="#a8a598"/><path d="M15 14 L19 16 L24 14 M19 16 V23" fill="none"/>
</g>
<path d="M2 7 L16 12 L27 6" fill="none" stroke="#2a9ad8" stroke-width="1.2" opacity="0.8"/>
</g>
<!-- paint bucket -->
<g transform="translate(24,43)">
<path d="M6 9 Q9 2 16 1.5 Q22 2 23 8 L22.5 17 Q20 23 13 23 Q7 22 6 17Z" fill="#9aa488" stroke="#2a2a2a" stroke-width="1.6"/>
<path d="M7 9 Q11 4 17 4 Q21 5 22 8 Q19 11 13 11 Q9 11 7 9Z" fill="#5a7aa0" stroke="#2a2a2a" stroke-width="1"/>
<path d="M9 14 L21 13 M10 18 L20 18 M14 11 V22" stroke="#c8c898" stroke-width="1.2"/>
<path d="M11 11 Q3 10 1 17 Q1 23 4 23.5 Q6 22 5.5 18 Q7 14 13 14Z" fill="#f2b818" stroke="#2a2a2a" stroke-width="1.1"/>
</g>
<!-- eraser -->
<g transform="translate(60,44)" stroke="#2a2a2a" stroke-width="1.3" stroke-linejoin="round">
<path d="M2 15 L14 3 L23 6 L11 18Z" fill="#f4a6b8"/>
<path d="M2 15 L11 18 L10 23 L1 20Z" fill="#e8849c"/>
<path d="M11 18 L23 6 L22 11 L10 23Z" fill="#d87088"/>
<path d="M10 9 L15 6" stroke="#8a4050" stroke-width="0.8"/>
</g>
<!-- pencil -->
<g transform="translate(27,87)">
<path d="M2 22 L5 15 L18 2 Q20 1 21 2 Q23 4 21 6 L8 19Z" fill="#d22832" stroke="#222" stroke-width="1.2"/>
<path d="M2 22 L5 15 L8 19Z" fill="#e8d4b0" stroke="#222" stroke-width="1"/>
<path d="M2 22 L3.5 18.5 L5.5 20.5Z" fill="#222"/>
</g>
<!-- freehand -->
<g transform="translate(59,87)" fill="none" stroke="#b01828" stroke-width="2">
<path d="M3 21 Q0 13 8 13 Q16 13 19 18 Q22 13 14 10 Q2 6 4 3 Q6 0 14 3 Q21 6 23 4 Q24 1 22 1"/>
<circle cx="3" cy="21" r="1.6" fill="#d61a2a" stroke="none"/><circle cx="22" cy="1" r="1.6" fill="#d61a2a" stroke="none"/>
</g>
<!-- rectangle -->
<g transform="translate(27,121)">
<rect x="2" y="1" width="19" height="20" fill="#8d8a7e" stroke="#222" stroke-width="1.2"/>
<path d="M2 21 L21 1" stroke="#fff" stroke-width="2.4"/><path d="M2 21 L21 1" stroke="#e03040" stroke-width="1"/>
<circle cx="2" cy="21" r="1.4" fill="#e01c2c"/><circle cx="21" cy="1" r="1.4" fill="#e01c2c"/>
</g>
<!-- rotated rectangle -->
<g transform="translate(61,121)">
<rect x="2" y="1" width="19" height="20" fill="#8d8a7e" stroke="#222" stroke-width="1"/>
<path d="M2 6 Q14 6 19 21" fill="none" stroke="#fff" stroke-width="2.2"/><path d="M2 6 Q14 6 19 21" fill="none" stroke="#e03040" stroke-width="1"/>
<path d="M2 1 V21 H21" fill="none" stroke="#e03040" stroke-width="1"/>
<circle cx="2" cy="1" r="1.3" fill="#e01c2c"/><circle cx="2" cy="21" r="1.3" fill="#e01c2c"/><circle cx="21" cy="21" r="1.3" fill="#e01c2c"/><circle cx="19" cy="21" r="1.3" fill="#e01c2c"/>
</g>
<!-- circle -->
<g transform="translate(26,153)">
<circle cx="12" cy="12" r="10.5" fill="#8d8a7e" stroke="#222" stroke-width="1.3"/>
<path d="M12 12 L18 6" stroke="#fff" stroke-width="2.2"/><path d="M12 12 L18 6" stroke="#e03040" stroke-width="1"/>
<circle cx="12" cy="12" r="1.4" fill="#e01c2c"/><circle cx="18" cy="6" r="1.4" fill="#e01c2c"/>
</g>
<!-- polygon -->
<g transform="translate(60,153)">
<circle cx="12" cy="12" r="10.5" fill="none" stroke="#e03040" stroke-width="1"/>
<path d="M5 7 L13 2 L21 8 L19 19 L8 21 L2 14Z" fill="#8d8a7e" stroke="#222" stroke-width="1.2"/>
<path d="M12 12 L19 7" stroke="#fff" stroke-width="2.2"/><path d="M12 12 L19 7" stroke="#e03040" stroke-width="1"/>
<circle cx="12" cy="12" r="1.4" fill="#e01c2c"/><circle cx="19" cy="7" r="1.4" fill="#e01c2c"/>
</g>
<!-- arc -->
<g transform="translate(26,187)">
<path d="M3 4 H21" stroke="#e03040" stroke-width="1"/><path d="M3 22 L21 4" stroke="#e03040" stroke-width="1"/>
<path d="M3 22 Q19 20 21 4" fill="none" stroke="#222" stroke-width="1.3"/>
<circle cx="3" cy="4" r="1.4" fill="#e01c2c"/><circle cx="21" cy="4" r="1.4" fill="#e01c2c"/><circle cx="3" cy="22" r="1.4" fill="#e01c2c"/>
</g>
<!-- 2pt arc -->
<g transform="translate(60,187)">
<path d="M6 8 Q12 1 22 6" fill="none" stroke="#222" stroke-width="1.3"/><path d="M6 8 Q1 17 7 22" fill="none" stroke="#222" stroke-width="1.3"/>
<path d="M6 8 L22 6 M7 22 L22 6 M12 7 L16 13" stroke="#e03040" stroke-width="1"/>
<circle cx="6" cy="8" r="1.4" fill="#e01c2c"/><circle cx="22" cy="6" r="1.4" fill="#e01c2c"/><circle cx="7" cy="22" r="1.4" fill="#e01c2c"/>
</g>
<!-- 3pt arc -->
<g transform="translate(26,221)">
<path d="M8 3 Q20 2 22 13 Q22 22 16 22" fill="none" stroke="#222" stroke-width="1.3"/>
<path d="M8 3 L16 22 L2 19" stroke="#e03040" stroke-width="1" fill="none"/>
<circle cx="8" cy="3" r="1.4" fill="#e01c2c"/><circle cx="16" cy="22" r="1.4" fill="#e01c2c"/><circle cx="2" cy="19" r="1.4" fill="#e01c2c"/>
</g>
<!-- pie -->
<g transform="translate(60,221)">
<path d="M3 3 H21 Q21 18 3 21Z" fill="#8d8a7e" stroke="#222" stroke-width="1.2"/>
<path d="M3 21 L21 3" stroke="#fff" stroke-width="2.2"/><path d="M3 21 L21 3 M3 3 H21" stroke="#e03040" stroke-width="1"/>
<circle cx="3" cy="3" r="1.4" fill="#e01c2c"/><circle cx="21" cy="3" r="1.4" fill="#e01c2c"/><circle cx="3" cy="21" r="1.4" fill="#e01c2c"/>
</g>
<!-- move -->
<g transform="translate(26,264)">
<path d="M12 1 L23 12 L12 23 L1 12Z" fill="#e01020" stroke="#3a0808" stroke-width="0.9" stroke-linejoin="round"/>
<g fill="#fff"><rect x="6.5" y="6.5" width="3.2" height="3.2"/><rect x="14.3" y="6.5" width="3.2" height="3.2"/><rect x="6.5" y="14.3" width="3.2" height="3.2"/><rect x="14.3" y="14.3" width="3.2" height="3.2"/><rect x="10.8" y="10.8" width="2.4" height="2.4"/></g>
<path d="M9.7 9.7 L14.3 14.3 M14.3 9.7 L9.7 14.3" stroke="#700810" stroke-width="0.6"/>
</g>
<!-- push pull -->
<g transform="translate(60,264)">
<path d="M1 15 L11 9 L23 14 L13 21Z" fill="#8d8a7e" stroke="#222" stroke-width="1.2"/>
<path d="M1 15 V18 L13 24 L23 17 V14" fill="#555" stroke="#222" stroke-width="1"/>
<path d="M9 16 V7 H6 L12 1 L18 7 H15 V16Z" fill="#e02030" stroke="#8a1018" stroke-width="0.8"/>
</g>
<!-- rotate -->
<g transform="translate(26,298)" fill="#d42030" stroke="#8a1018" stroke-width="0.6">
<path d="M3 10 Q5 2 13 2 Q19 2 21 7 L23 4 L22 13 L15 10 L18 9 Q16 6 12 6 Q8 6 7 11Z"/>
<path d="M21 14 Q19 22 11 22 Q5 22 3 17 L1 20 L2 11 L9 14 L6 15 Q8 18 12 18 Q16 18 17 13Z"/>
</g>
<!-- follow me -->
<g transform="translate(60,298)">
<path d="M1.5 17 Q1 6 11 2.5 Q19 0 22.5 3 Q24 6 23 10 L19.5 12 Q19 6 14 6.5 Q6 8.5 7 16 Q7.5 20 9 23 L6 24 Q2 22 1.5 17Z" fill="#7a7070" stroke="#1a1a1a" stroke-width="1.3" stroke-linejoin="round"/>
<path d="M4.5 17 Q4 8 12 4.5 Q18 3 21 6" fill="none" stroke="#c8202c" stroke-width="3"/>
<path d="M8.5 12 L15 10 L13.5 13.5 L19 15.5 L13 17.5 L15 21 L8.5 18Z" fill="#d81c2a" stroke="#6a0a10" stroke-width="0.8"/>
</g>
<!-- scale -->
<g transform="translate(26,332)">
<rect x="1" y="1" width="23" height="23" fill="none" stroke="#e09090" stroke-width="1"/>
<rect x="1.5" y="7" width="16.5" height="17" fill="#8d8a7e" stroke="#222" stroke-width="1.3"/>
<path d="M8.5 15.5 L14.5 9.5 L12 7 L22.5 2.5 L18.5 13 L16 10.5 L10 16.5Z" fill="#e8101e" stroke="#4a0808" stroke-width="0.8" stroke-linejoin="round"/>
</g>
<!-- offset -->
<g transform="translate(60,332)">
<path d="M1.5 5 Q12 -1 19 3.5 Q25 9 22 22" fill="none" stroke="#e0303c" stroke-width="1.4"/>
<path d="M3 14 Q6 8 13 7 M6 22 Q3 17 7 13" fill="none" stroke="#333" stroke-width="1.6"/>
<path d="M8.5 16 L14.5 10 L12 7.5 L21.5 5.5 L19.5 15 L17 12.5 L11 18.5Z" fill="#e8101e" stroke="#4a0808" stroke-width="0.8" stroke-linejoin="round"/>
</g>
<!-- tape -->
<g transform="translate(26,374)">
<path d="M13 3 Q17 0 22 3 L21 13 Q17 16 13 14Z" fill="#444" stroke="#111" stroke-width="1.2"/>
<path d="M15 5 L20 4 L19 11 L14 12Z" fill="#e8e818"/>
<path d="M3 19 L14 13 L15 16 L4 22Z" fill="#e8e818" stroke="#111" stroke-width="1"/>
<rect x="1" y="18" width="4" height="5" fill="#111" transform="rotate(-30 3 20)"/>
</g>
<!-- dimension -->
<g transform="translate(60,374)">
<path d="M2 13 L14 2 M7 13 L19 23 M14 2 L23 10" stroke="#111" stroke-width="1.1"/>
<path d="M0 11 L4 15 M2 11 L2 15 M12 0 L16 4 M14 0 L14 4" stroke="#111" stroke-width="1.2"/>
<text x="2" y="7" font-size="8" font-family="Liberation Sans" fill="#111">3</text>
<circle cx="23" cy="10" r="1.2" fill="#40b040"/><circle cx="19" cy="23" r="1.2" fill="#40b040"/>
</g>
<!-- protractor -->
<g transform="translate(26,408)">
<path d="M2 22 Q2 8 13 4 Q19 2 23 3 Z" fill="#d8c830" stroke="#222" stroke-width="1.2"/>
<path d="M7 17 Q8 10 15 7 Z" fill="#f0f0f0" stroke="#333" stroke-width="0.8"/>
</g>
<!-- text -->
<g transform="translate(60,408)">
<rect x="8" y="1" width="15" height="12" fill="#fff" stroke="#111" stroke-width="1"/>
<text x="9.5" y="10.5" font-size="8.5" font-family="Liberation Serif" fill="#111">A1</text>
<path d="M4 10 V20" stroke="#777" stroke-width="1.2" stroke-dasharray="1.2 0.8"/><path d="M8 6 H4 V8" stroke="#777" stroke-width="1" fill="none"/>
<path d="M1.5 19 H6.5 L4 23Z" fill="#111"/>
</g>
<!-- axes -->
<g transform="translate(26,442)">
<path d="M12 13 V3" stroke="#1f5fa8" stroke-width="2.4"/><path d="M8.5 5 L12 0 L15.5 5Z" fill="#1f5fa8"/>
<path d="M12 13 L20 8" stroke="#3aa050" stroke-width="1.8"/><path d="M17 6 L22 6 L20 10Z" fill="#3aa050"/>
<path d="M12 13 L20 19" stroke="#d02030" stroke-width="1.8"/><path d="M17 21 L23 21 L20 16Z" fill="#d02030"/>
<path d="M12 13 V22 M12 13 L3 8 M12 13 L3 18" stroke="#d0a0a8" stroke-width="1" stroke-dasharray="1.5 1"/>
<circle cx="12" cy="13" r="1.6" fill="#111"/>
</g>
<!-- 3d text -->
<g transform="translate(60,442)">
<path d="M3 21 L10 2 L15 2 L22 21 L17 21 L15.5 16 L9.5 16 L8 21Z M10.5 12.5 H14.5 L12.5 6Z" fill="#6a6a60" stroke="#222" stroke-width="1.1"/>
<path d="M8 21 L11 23 H4 L3 21 M17 21 L20 23 H24 L22 21" fill="#3a3a30" stroke="#222" stroke-width="0.8"/>
</g>
<!-- orbit -->
<g transform="translate(26,484)">
<path d="M11 4.5 Q2 5 1.5 11 Q2 17 11 18.5 L11 21.5 L16 16 L11 11.5 L11 14.5 Q5.5 14 5.5 11 Q6 8.5 11 8.5Z" fill="#c8202c" stroke="#501010" stroke-width="0.8" stroke-linejoin="round"/>
<path d="M13 18 Q22 17 22.5 11 Q22 5 13 4 L13 1 L8.5 6 L13 10.5 L13 7.5 Q18.5 8 18.5 11 Q18 14 13 14Z" fill="#40a860" stroke="#104020" stroke-width="0.8" stroke-linejoin="round"/>
<path d="M12 0 V23" stroke="#111" stroke-width="1.8"/>
</g>
<!-- pan -->
<g transform="translate(59,484)">
<path d="M2.5 22 Q1 17 5 13.5 L9.5 9 Q10.5 6 12.5 5 L16 3 Q18 2.5 18.5 4 L20.5 3.5 Q22.5 3.5 22 5.5 L23 6.5 Q23.5 8.5 21.5 9.5 L18 12 L20 12.5 Q22 13.5 20 15 L15 17 Q12 21 8 22.5Z" fill="#f4e2b8" stroke="#9a8a60" stroke-width="1"/>
<path d="M12.5 8 L18 4.5 M14 10 L20.5 5.5 M15.5 12 L21.5 8.5" stroke="#b0a070" stroke-width="0.9"/>
</g>
<!-- zoom -->
<g transform="translate(26,518)">
<circle cx="14" cy="9" r="7" fill="#a8c8e8" stroke="#1a1a1a" stroke-width="2"/>
<path d="M9 14 L2 21" stroke="#1a1a1a" stroke-width="3.5" stroke-linecap="round"/>
</g>
<!-- zoom window -->
<g transform="translate(60,518)">
<rect x="1.5" y="1" width="22" height="22" fill="none" stroke="#e02030" stroke-width="1.4"/>
<circle cx="14" cy="9" r="6.5" fill="#a8c8e8" stroke="#1a1a1a" stroke-width="2"/>
<path d="M9 14 L2 21" stroke="#1a1a1a" stroke-width="3.5" stroke-linecap="round"/>
</g>
<!-- zoom extents -->
<g transform="translate(26,551)">
<circle cx="12" cy="12.5" r="5.5" fill="#a8c8e8" stroke="#1a1a1a" stroke-width="1.6"/>
<path d="M8 16.5 L2.5 22" stroke="#1a1a1a" stroke-width="2.8" stroke-linecap="round"/>
<path d="M0.5 1 L8 2 L6 4 L9 7 L7 9 L4 6 L2 8Z M23.5 1 L16 2 L18 4 L15 7 L17 9 L20 6 L22 8Z M23.5 23.5 L16 22.5 L18 20.5 L15 17.5 L17 15.5 L20 18.5 L22 16.5Z" fill="#d81a24" stroke="#601010" stroke-width="0.5"/>
</g>
<!-- previous -->
<g transform="translate(60,551)">
<circle cx="10" cy="10" r="7.5" fill="#a8c8e8" stroke="#1a1a1a" stroke-width="1.6"/>
<path d="M14 16 L21 22" stroke="#1a1a1a" stroke-width="3.2" stroke-linecap="round"/>
<path d="M3 8 Q6 1 14 3 Q21 6 19 14 L15 11 Q17 6 11 5 L12 1 L5 6 L10 10 Q14 9 15 12" fill="#2e8ad8" stroke="#1a4a80" stroke-width="0.8"/>
</g>
<!-- position camera -->
<g transform="translate(26,593)">
<circle cx="12" cy="3.2" r="2.2" fill="#fff" stroke="#222" stroke-width="1"/>
<path d="M9.5 6.5 Q12 5.5 14.5 6.5 Q16 8 16 12 V16 L14.5 16.5 V21 H13 V17 H11 V21 H9.5 V16.5 L8 16 V12 Q8 8 9.5 6.5Z" fill="#fff" stroke="#222" stroke-width="1"/>
<path d="M7.5 18 L16.5 24 M16.5 18 L7.5 24" stroke="#e03040" stroke-width="1.3"/>
</g>
<!-- look around -->
<g transform="translate(58,595)">
<path d="M2 11 Q13 -1 26 9 Q15 20 2 11Z" fill="#fff" stroke="#111" stroke-width="1.3"/>
<path d="M2 8 Q13 -4 26 7" fill="none" stroke="#111" stroke-width="1.6"/>
<circle cx="12" cy="10" r="4.5" fill="#111"/><circle cx="13.5" cy="8.5" r="1.2" fill="#fff"/>
<path d="M5 15 Q15 20 24 13" fill="none" stroke="#bbb" stroke-width="1.2"/>
</g>
<!-- walk -->
<g transform="translate(26,627)">
<path d="M5 3 Q10 2 10 8 Q10 14 8 18 Q4 18 3 14 Q1 6 5 3Z M3.5 19 Q8 19 8 22 Q6 25 3.5 23Z" fill="#111"/>
<path d="M17 1 Q22 0 22 6 Q21 12 17 14 Q13 14 13 10 Q13 3 17 1Z M13 15 Q17 15 17 18 Q15 21 12 19Z" fill="#111"/>
<path d="M4 10 H8 M15 7 H20" stroke="#777" stroke-width="0.8"/>
</g>
<!-- section -->
<g transform="translate(60,627)">
<circle cx="12" cy="12" r="8" fill="#fff" stroke="#111" stroke-width="1.3"/>
<path d="M1 12 H22" stroke="#111" stroke-width="1.8"/><path d="M16 5 L23 12 L16 19" fill="none" stroke="#111" stroke-width="1.8"/>
<text x="9.5" y="10" font-size="6" font-family="Liberation Serif" fill="#111">C</text>
<text x="7.5" y="18" font-size="5" font-family="Liberation Serif" fill="#111">3.1</text>
</g>
<!-- warehouse -->
<g transform="translate(26,669)">
<path d="M11 1 L21 6 V16 L11 21 L1 16 V6Z" fill="none" stroke="#1e62b0" stroke-width="2.2"/>
<path d="M11 5 L17 8.5 V14 L11 17 L5 14 V8.5Z" fill="none" stroke="#1e62b0" stroke-width="1.8"/>
<path d="M11 8 L14 10 V13 L11 14.5 L8 13 V10Z" fill="#1e62b0"/>
<path d="M18 15 V21 M15 19 L18 23 L21 19" stroke="#1e62b0" stroke-width="1.8" fill="#fff"/>
</g>
<!-- extension warehouse -->
<g transform="translate(60,671)" fill="#1e62b0">
<path d="M1 2 L11 7 L23 2 V6 L11 11 L1 6Z"/>
<path d="M3 9 L11 13 L21 9 V12 L11 16 L3 12Z" />
<path d="M1 16 L11 11 L23 16 V20 L11 15 L1 20Z"/>
</g>
<!-- bottom row partial -->
<g transform="translate(26,700)" fill="#1e62b0">
<path d="M2 10 L12 5 L22 10 L12 15Z" fill="none" stroke="#1e62b0" stroke-width="2"/>
<path d="M2 14 L12 19 L22 14 M2 18 L12 23 L22 18" fill="none" stroke="#1e62b0" stroke-width="2"/>
<rect x="9" y="8" width="5" height="4" fill="#1e62b0"/>
</g>
<g transform="translate(60,702)" fill="#1e62b0">
<path d="M1 2 L11 7 L23 2 V6 L11 11 L1 6Z"/>
<path d="M1 16 L11 11 L23 16 V20 L11 15 L1 20Z"/>
</g>
</svg>

</body></html>
